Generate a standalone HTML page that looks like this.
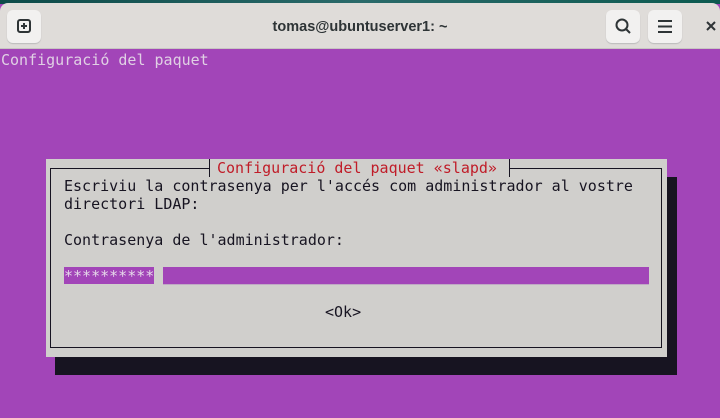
<!DOCTYPE html>
<html><head><meta charset="utf-8"><style>
*{margin:0;padding:0;box-sizing:border-box}
body{width:720px;height:418px;overflow:hidden;background:#a245b8;position:relative;font-family:"DejaVu Sans Mono","Liberation Mono",monospace;font-size:15px}
.top{position:absolute;left:0;top:0;width:720px;height:4px;background:linear-gradient(90deg,#0c4a48,#2a6a6a 50%,#0c5a50)}
.hdr{position:absolute;left:0;top:3px;width:720px;height:46px;background:#dfdcd9;border-radius:8px 8px 0 0;border-bottom:1px solid #c8c5c2}
.btn{position:absolute;top:7px;width:34px;height:33px;background:#f2f1f0;border-radius:6px;box-shadow:0 1px 1px #bbb}
.title{position:absolute;top:16px;left:0;width:720px;text-align:center;font-family:"Liberation Sans",sans-serif;font-size:14.5px;font-weight:bold;color:#2e3436}
.t{position:absolute;white-space:pre;line-height:18px;height:18px}
</style></head><body>
<div class="top"></div>
<div class="hdr">
 <div class="btn" style="left:7px"><svg width="34" height="33"><rect x="11" y="10" width="12" height="12" rx="2" fill="none" stroke="#2e3436" stroke-width="2"/><path d="M17 13v6M14 16h6" stroke="#2e3436" stroke-width="2"/></svg></div>
 <div class="title">tomas@ubuntuserver1: ~</div>
 <div class="btn" style="left:606px"><svg width="34" height="33"><circle cx="16" cy="15" r="5.5" fill="none" stroke="#2e3436" stroke-width="2"/><path d="M20 19l4 4" stroke="#2e3436" stroke-width="2"/></svg></div>
 <div class="btn" style="left:648px"><svg width="34" height="33"><path d="M10 11h14M10 16.5h14M10 22h14" stroke="#2e3436" stroke-width="2"/></svg></div>
 <svg style="position:absolute;left:706px;top:18px" width="10" height="10"><path d="M1 1l8 8M9 1l-8 8" stroke="#2e3436" stroke-width="2"/></svg>
</div>
<div class="t" style="left:1px;top:51px;color:#e0d0e4">Configuració del paquet</div>
<div style="position:absolute;left:55px;top:177px;width:622px;height:198px;background:#171421"></div>
<div style="position:absolute;left:46px;top:159px;width:621px;height:198px;background:#d0cfcc"></div>
<div style="position:absolute;left:50px;top:168px;width:612px;height:180px;border:1px solid #171421"></div>
<div style="position:absolute;left:203px;top:159px;width:312px;height:18px;background:#d0cfcc"></div>
<div style="position:absolute;left:209px;top:159px;width:1px;height:18px;background:#171421"></div>
<div style="position:absolute;left:509px;top:159px;width:1px;height:18px;background:#171421"></div>
<div style="position:absolute;left:203px;top:168px;width:6px;height:1px;background:#171421"></div>
<div style="position:absolute;left:509px;top:168px;width:6px;height:1px;background:#171421"></div>
<div class="t" style="left:217px;top:159px;color:#c01c28">Configuració del paquet «slapd»</div>
<div class="t" style="left:64px;top:177px;color:#171421">Escriviu la contrasenya per l'accés com administrador al vostre</div>
<div class="t" style="left:64px;top:195px;color:#171421">directori LDAP:</div>
<div class="t" style="left:64px;top:231px;color:#171421">Contrasenya de l'administrador:</div>
<div style="position:absolute;left:64px;top:267px;width:90px;height:17px;background:#a245b8"></div>
<div style="position:absolute;left:163px;top:267px;width:486px;height:17px;background:#a245b8"></div>
<div style="position:absolute;left:163px;top:284px;width:486px;height:1px;background:#bfa9c4"></div>
<div class="t" style="left:64px;top:267px;color:#e6d8ea">**********</div>
<div class="t" style="left:325px;top:303px;color:#171421">&lt;Ok&gt;</div>
</body></html>
